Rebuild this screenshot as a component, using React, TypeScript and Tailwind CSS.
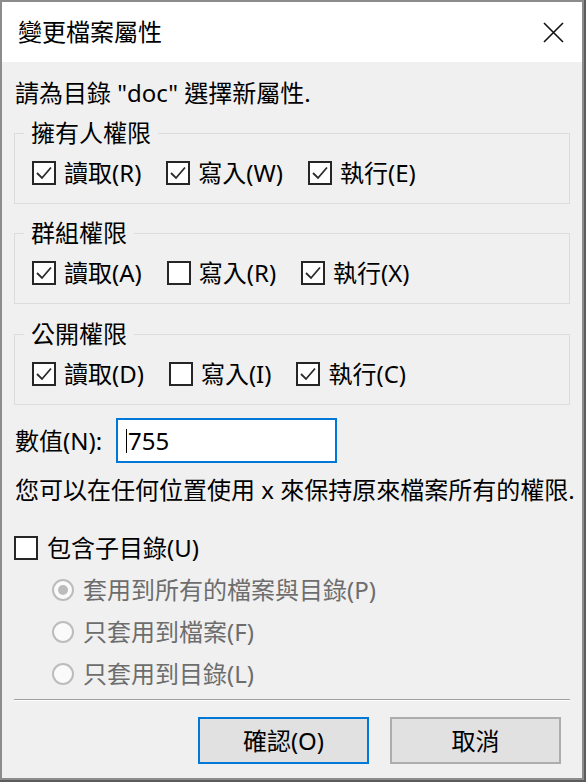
import type { ReactNode } from "react";

const Check = ({ checked }: { checked: boolean }) => (
  <span className="flex h-[24px] w-[24px] shrink-0 items-center justify-center border-2 border-[#262626] bg-white">
    {checked && (
      <svg viewBox="0 0 20 20" className="h-[20px] w-[20px]">
        <path d="M3 10 L8 15 L17 4.5" fill="none" stroke="#2b2b2b" strokeWidth="1.8" />
      </svg>
    )}
  </span>
);

const CheckItem = ({ checked, children }: { checked: boolean; children: ReactNode }) => (
  <label className="flex h-[28px] items-center gap-[8px] whitespace-nowrap">
    <Check checked={checked} />
    <span>{children}</span>
  </label>
);

const Radio = ({ checked, children }: { checked?: boolean; children: ReactNode }) => (
  <div className="flex h-[28px] items-center gap-[9px] whitespace-nowrap text-[#6d6d6d]">
    <span className="flex h-[22px] w-[22px] shrink-0 items-center justify-center rounded-full border-2 border-[#bcbcbc] bg-[#fafafa]">
      {checked && <span className="h-[10px] w-[10px] rounded-full bg-[#bcbcbc]" />}
    </span>
    <span>{children}</span>
  </div>
);

interface GroupProps {
  title: string;
  items: [string, boolean][];
  className?: string;
}

const Group = ({ title, items, className }: GroupProps) => (
  <fieldset className={`border border-[#dcdcdc] px-[17px] pt-[12px] pb-[16px] ${className ?? ""}`}>
    <legend className="-ml-[8px] px-[7px] leading-[28px]">{title}</legend>
    <div className="flex items-center gap-[25px]">
      {items.map(([label, checked]) => (
        <CheckItem key={label} checked={checked}>
          {label}
        </CheckItem>
      ))}
    </div>
  </fieldset>
);

export default function App() {
  return (
    <div className="h-[782px] w-[586px] bg-[#5c5c5c] font-['Noto_Sans','Noto_Sans_CJK_TC',sans-serif] text-[24px] leading-[28px] text-black">
      <div className="flex h-[780px] w-[584px] flex-col border-2 border-[#8c8c8c] bg-[#f0f0f0]">
        <div className="flex h-[60px] shrink-0 items-center justify-between bg-white pl-[16px] pr-[18px]">
          <span>變更檔案屬性</span>
          <svg viewBox="0 0 21 21" className="h-[21px] w-[21px]">
            <path d="M1 1 L20 20 M20 1 L1 20" stroke="#111111" strokeWidth="1.6" />
          </svg>
        </div>

        <div className="flex flex-1 flex-col px-[12px] pt-[17px]">
          <p className="pl-[1px] whitespace-nowrap">請為目錄 "doc" 選擇新屬性.</p>

          <Group
            className="mt-[12px]"
            title="擁有人權限"
            items={[
              ["讀取(R)", true],
              ["寫入(W)", true],
              ["執行(E)", true],
            ]}
          />
          <Group
            className="mt-[15px]"
            title="群組權限"
            items={[
              ["讀取(A)", true],
              ["寫入(R)", false],
              ["執行(X)", true],
            ]}
          />
          <Group
            className="mt-[16px]"
            title="公開權限"
            items={[
              ["讀取(D)", true],
              ["寫入(I)", false],
              ["執行(C)", true],
            ]}
          />

          <div className="mt-[13px] flex h-[45px] items-center">
            <span className="w-[102px] shrink-0 pl-[1px]">數值(N):</span>
            <div className="flex h-[45px] w-[221px] items-center border-2 border-[#0078d7] bg-white pl-[8px]">
              <span className="h-[24px] w-[1px] bg-black" />
              <span className="pl-[1px]">755</span>
            </div>
          </div>

          <p className="mt-[13px] pl-[1px] whitespace-nowrap">您可以在任何位置使用 x 來保持原來檔案所有的權限.</p>

          <label className="mt-[30px] flex h-[28px] items-center gap-[9px]">
            <Check checked={false} />
            <span>包含子目錄(U)</span>
          </label>

          <div className="mt-[14px] flex flex-col gap-[14px] pl-[38px]">
            <Radio checked>套用到所有的檔案與目錄(P)</Radio>
            <Radio>只套用到檔案(F)</Radio>
            <Radio>只套用到目錄(L)</Radio>
          </div>

          <div className="mt-[11px] h-[2px] border-t border-b border-t-[#a0a0a0] border-b-white" />

          <div className="mt-[16px] flex justify-end gap-[21px] pr-[9px]">
            <button className="flex h-[47px] w-[171px] items-center justify-center border-2 border-[#0078d7] bg-[#e1e1e1]">
              確認(O)
            </button>
            <button className="flex h-[47px] w-[171px] items-center justify-center border-2 border-[#adadad] bg-[#e1e1e1]">
              取消
            </button>
          </div>
        </div>
      </div>
    </div>
  );
}
